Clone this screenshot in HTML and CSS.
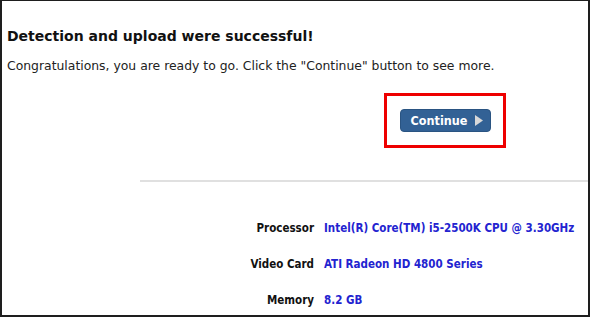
FILE: index.html
```html
<!DOCTYPE html>
<html>
<head>
<meta charset="utf-8">
<link rel="stylesheet" href="styles.css">
</head>
<body>
<div class="frame">
  <h1 class="title">Detection and upload were successful!</h1>
  <p class="intro">Congratulations, you are ready to go. Click the "Continue" button to see more.</p>
  <div class="action">
    <div class="highlight">
      <button class="btn">Continue <svg class="arrow" width="8" height="11" viewBox="0 0 8 11"><path d="M0 0 L8 5.5 L0 11 Z" fill="#d8d8d8"/></svg></button>
    </div>
  </div>
  <hr class="rule">
  <dl class="specs">
    <div class="row"><dt>Processor</dt><dd>Intel(R) Core(TM) i5-2500K CPU @ 3.30GHz</dd></div>
    <div class="row"><dt>Video Card</dt><dd>ATI Radeon HD 4800 Series</dd></div>
    <div class="row"><dt>Memory</dt><dd>8.2 GB</dd></div>
  </dl>
</div>
</body>
</html>
```
FILE: styles.css
```css
html, body { margin: 0; padding: 0; background: #fff; }
.frame {
  box-sizing: border-box;
  width: 590px;
  height: 317px;
  border: 2px solid #1e1e1e;
  border-top-width: 1px;
  overflow: hidden;
  font-family: "DejaVu Sans", Verdana, sans-serif;
  color: #111;
  padding: 0 0 0 5px;
}
.title {
  margin: 26px 0 0 0;
  font-size: 14px;
  font-weight: bold;
  line-height: 18px;
}
.intro {
  margin: 13px 0 0 0;
  font-size: 12.4px;
  line-height: 16px;
  color: #222;
}
.action {
  display: flex;
  padding-left: 377px;
  margin-top: 19px;
}
.highlight {
  border: 3px solid #ee0000;
  width: 116px;
  height: 49px;
  display: flex;
  align-items: center;
  justify-content: center;
}
.btn {
  background: #326195;
  color: #fff;
  border: 1px solid #2a5482;
  border-radius: 4px;
  width: 91px;
  height: 23px;
  font-family: "DejaVu Sans Condensed", "DejaVu Sans", sans-serif;
  font-weight: bold;
  font-size: 12.5px;
  display: flex;
  align-items: center;
  justify-content: center;
  gap: 8px;
  padding: 0 0 0 4px;
}
.rule {
  margin: 32px 0 0 133px;
  border: 0;
  border-top: 2px solid #e0e0e0;
}
.specs {
  margin: 39px 0 0 0;
  font-family: "DejaVu Sans Condensed", "DejaVu Sans", sans-serif;
  font-size: 11.5px;
}
.row {
  display: flex;
  gap: 10px;
  height: 36px;
  align-items: flex-start;
}
.row dt {
  flex: none;
  width: 307px;
  text-align: right;
  font-weight: bold;
  color: #111;
}
.row dd {
  margin: 0;
  white-space: nowrap;
  font-weight: bold;
  color: #2323d0;
}
```
